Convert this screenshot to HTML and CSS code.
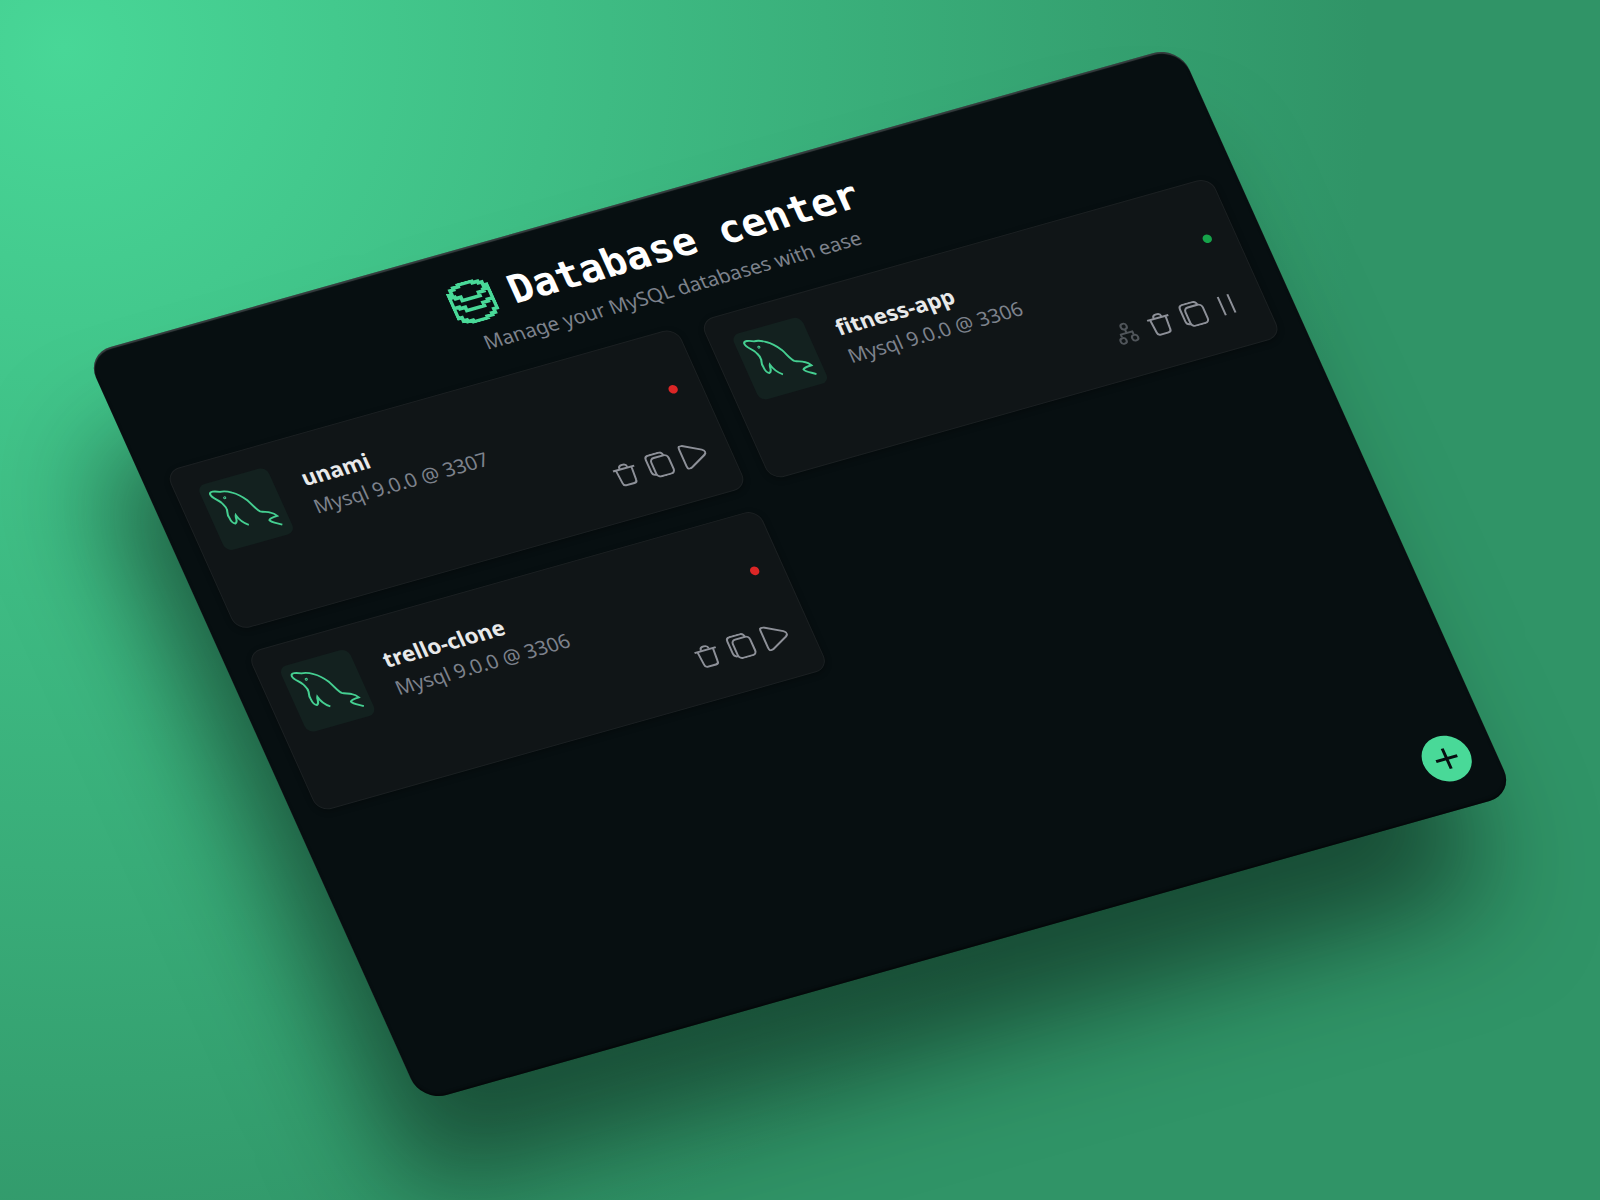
FILE: index.html
```html
<!DOCTYPE html>
<html lang="en">
<head>
<meta charset="utf-8">
<meta name="viewport" content="width=device-width, initial-scale=1">
<title>Database center</title>
<link rel="stylesheet" href="styles.css">
</head>
<body>
<svg class="sprite" aria-hidden="true">
  <symbol id="database" viewBox="0 0 24 24">
    <path d="M8 1h8v1h3v1h2v2h2v14h-2v2h-2v1h-3v1H8v-1H5v-1H3v-2H1V5h2V3h2V2h3zM2 7h2v1h3v2h10V8h3V7h2M2 13h2v1h3v2h10v-2h3v-1h2"/>
  </symbol>
  <symbol id="dolphin" viewBox="-3 -2 72 72">
    <path d="M13 21C11 17 6 14 6 10c0-4 6-2 10 0c5 0 8 2 11 4c5 3 8 7 11 12c3 6 4 11 7 14c3 2 7 2 9 4c2 1 4 3 5 5c-4 0-8 0-9 2c1 3 6 5 10 8M13 21c1 3 3 5 2 9c-1 3-2 5-1 8c0 3 1 6 3 7c4-1 2-5 4-8c1 5 4 10 8 13"/>
    <circle class="eye" cx="18" cy="17" r="1"/>
  </symbol>
  <symbol id="trash" viewBox="0 0 26 26">
    <path d="M2 7h22M9 6c0-3 2-3 4-3s4 0 4 3M5 7l1 14c0 2 1 3 3 3h8c2 0 3-1 3-3l1-14"/>
  </symbol>
  <symbol id="copy" viewBox="0 0 26 26">
    <rect x="6" y="5" width="18" height="20" rx="4"/>
    <path d="M6 22c-3 0-4-2-4-4V5c0-3 1-4 4-4h10c3 0 4 1 4 4"/>
  </symbol>
  <symbol id="play" viewBox="0 0 26 26">
    <path d="M2 4c0-3 1-4 4-3l17 9c3 2 3 4 0 6L6 25c-3 1-4 0-4-3z"/>
  </symbol>
  <symbol id="pause" viewBox="0 0 26 26">
    <path d="M7 3v20M17 3v20"/>
  </symbol>
  <symbol id="network" viewBox="0 0 26 26">
    <circle cx="13" cy="6" r="3"/><circle cx="7" cy="20" r="3"/><circle cx="19" cy="20" r="3"/>
    <path d="M13 9v4M7 16v-3h12v3"/>
  </symbol>
</svg>

<main class="stage">
  <section class="window">
    <header class="heading">
      <div class="brand">
        <svg class="brand-icon" aria-hidden="true"><use href="#database"/></svg>
        <h1 class="title">Database center</h1>
      </div>
      <p class="subtitle">Manage your MySQL databases with ease</p>
    </header>

    <div class="grid">
      <article class="card">
        <div class="card-head">
          <div class="thumb"><svg class="dolphin" aria-hidden="true"><use href="#dolphin"/></svg></div>
          <div class="info">
            <h2 class="name">unami</h2>
            <p class="meta">Mysql 9.0.0 @ 3307</p>
          </div>
          <span class="status stopped"></span>
        </div>
        <div class="actions">
          <button class="action" aria-label="Delete"><svg class="icon"><use href="#trash"/></svg></button>
          <button class="action" aria-label="Copy"><svg class="icon"><use href="#copy"/></svg></button>
          <button class="action" aria-label="Start"><svg class="icon"><use href="#play"/></svg></button>
        </div>
      </article>

      <article class="card">
        <div class="card-head">
          <div class="thumb"><svg class="dolphin" aria-hidden="true"><use href="#dolphin"/></svg></div>
          <div class="info">
            <h2 class="name">fitness-app</h2>
            <p class="meta">Mysql 9.0.0 @ 3306</p>
          </div>
          <span class="status running"></span>
        </div>
        <div class="actions">
          <button class="action muted" aria-label="Connections" disabled><svg class="icon"><use href="#network"/></svg></button>
          <button class="action" aria-label="Delete"><svg class="icon"><use href="#trash"/></svg></button>
          <button class="action" aria-label="Copy"><svg class="icon"><use href="#copy"/></svg></button>
          <button class="action" aria-label="Pause"><svg class="icon"><use href="#pause"/></svg></button>
        </div>
      </article>

      <article class="card">
        <div class="card-head">
          <div class="thumb"><svg class="dolphin" aria-hidden="true"><use href="#dolphin"/></svg></div>
          <div class="info">
            <h2 class="name">trello-clone</h2>
            <p class="meta">Mysql 9.0.0 @ 3306</p>
          </div>
          <span class="status stopped"></span>
        </div>
        <div class="actions">
          <button class="action" aria-label="Delete"><svg class="icon"><use href="#trash"/></svg></button>
          <button class="action" aria-label="Copy"><svg class="icon"><use href="#copy"/></svg></button>
          <button class="action" aria-label="Start"><svg class="icon"><use href="#play"/></svg></button>
        </div>
      </article>
    </div>

    <button class="add" aria-label="Add database">
      <svg class="plus" viewBox="0 0 24 24"><path d="M12 1v22M1 12h22"/></svg>
    </button>
  </section>
</main>
</body>
</html>
```
FILE: styles.css
```css
* {
  box-sizing: border-box;
  margin: 0;
}

body {
  background: radial-gradient(circle at 4% 4%, #48d797, #309467 68%);
  background-attachment: fixed;
  font-family: "Noto Sans", sans-serif;
}

.sprite {
  display: none;
}

.stage {
  display: flex;
  align-items: center;
  justify-content: center;
  min-height: 100vh;
  padding-bottom: 52px;
  overflow: hidden;
}

.window {
  position: relative;
  display: flex;
  flex-direction: column;
  gap: 21px;
  width: 71%;
  min-height: 820px;
  padding: 27px 25px;
  border-radius: 26px;
  background: #070f11;
  box-shadow:
    inset 0 2px 1px rgba(255, 255, 255, 0.2),
    inset 0 -2px 3px rgba(0, 0, 0, 0.5),
    -50px 100px 110px -10px rgba(8, 28, 20, 0.6);
  transform: matrix(0.9624, -0.2713, 0.4097, 0.9122, 0, 0);
}

.heading {
  display: flex;
  flex-direction: column;
  align-items: center;
}

.brand {
  display: flex;
  align-items: center;
  gap: 16px;
}

.brand-icon {
  width: 44px;
  height: 44px;
  fill: none;
  stroke: #49d998;
  stroke-width: 2;
}

.title {
  color: #fff;
  font: bold 40px/56px "DejaVu Sans Mono", monospace;
}

.subtitle {
  color: #7d828c;
  font-size: 20px;
  line-height: 32px;
}

.grid {
  display: grid;
  grid-template-columns: 1fr 1fr;
  gap: 24px;
}

.card {
  display: flex;
  flex-direction: column;
  gap: 20px;
  padding: 22px 23px 31px 22px;
  border: 1px solid #1b2022;
  border-radius: 14px;
  background: #101517;
  box-shadow: 0 2px 6px rgba(0, 0, 0, 0.3);
}

.card-head {
  display: flex;
  align-items: center;
  gap: 28px;
}

.thumb {
  width: 72px;
  height: 72px;
  border-radius: 8px;
  background: #13211f;
}

.dolphin {
  display: block;
  width: 72px;
  height: 72px;
  fill: none;
  stroke: #45cf91;
  stroke-width: 2;
}

.eye {
  stroke-width: 1;
}

.info {
  flex: 1;
  padding-top: 2px;
}

.name {
  color: #e8e9ea;
  font-size: 22px;
  line-height: 32px;
}

.meta {
  color: #7d828c;
  font-size: 20px;
  line-height: 32px;
}

.status {
  width: 9px;
  height: 9px;
  border-radius: 50%;
}

.stopped {
  background: #dc2626;
}

.running {
  background: #16a34a;
}

.actions {
  display: flex;
  justify-content: flex-end;
  gap: 9px;
}

.action {
  display: flex;
  padding: 1px 0;
  border: 0;
  background: none;
  color: #8d9098;
}

.muted {
  color: #50555a;
}

.icon {
  width: 26px;
  height: 26px;
  fill: none;
  stroke: currentColor;
  stroke-width: 2;
  stroke-linejoin: round;
}

.add {
  position: absolute;
  right: 24px;
  bottom: 29px;
  display: flex;
  align-items: center;
  justify-content: center;
  width: 48px;
  height: 48px;
  padding: 0;
  border: 0;
  border-radius: 50%;
  background: #49d998;
}

.plus {
  width: 24px;
  height: 24px;
  stroke: #070e10;
  stroke-width: 3;
}
```
